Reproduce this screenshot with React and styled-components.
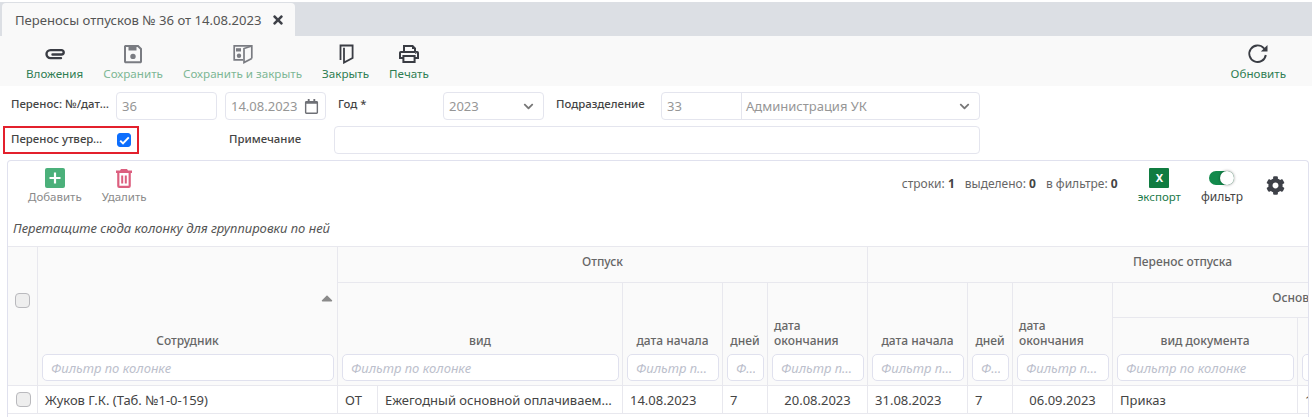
import React from "react";
import styled, { createGlobalStyle } from "styled-components";
import { FaTimes, FaRegCalendar, FaChevronDown, FaCog, FaCaretUp } from "react-icons/fa";

const Global = createGlobalStyle`
  html, body { margin: 0; padding: 0; background: #fff; }
  body { font-family: "Noto Sans", "Open Sans", sans-serif; font-size: 12px; color: #444; }
  * { box-sizing: border-box; }
`;

const Page = styled.div`
  width: 1312px;
  height: 417px;
  overflow: hidden;
  background: #fff;
  padding-top: 2px;
`;
const TabBar = styled.div`
  height: 34px;
  background: #dcdfe4;
  padding: 1px 0 0 2px;
  display: flex;
`;
const Tab = styled.div`
  width: 293px;
  height: 33px;
  background: #f9f9f9;
  border-radius: 4px 4px 0 0;
  display: flex;
  align-items: center;
  padding: 0 10px 0 13px;
  justify-content: space-between;
  font-size: 13.1px;
  white-space: nowrap;
  color: #555;
  svg { color: #3e4148; font-size: 14px; }
`;
const Toolbar = styled.div`
  height: 50px;
  background: #f9f9f9;
  display: flex;
  gap: 20px;
  padding: 8px 26px 0;
`;
const ToolButton = styled.div`
  display: flex;
  flex-direction: column;
  align-items: center;
  gap: 2px;
  font-size: 11.65px;
  line-height: 16px;
  font-weight: 400;
  color: ${(p) => (p.$disabled ? "#7db795" : "#2f7d52")};
  ${(p) => p.$push && "margin-left: auto;"}
`;
const ToolIcon = styled.svg`
  display: block;
  width: 24px;
  height: 20px;
  color: ${(p) => (p.$disabled ? "#7a7c82" : "#3a3d44")};
`;
const Form = styled.div`
  display: flex;
  flex-direction: column;
  gap: 6px;
  padding: 6px 0 6px;
`;
const FormRow = styled.div`
  display: flex;
  align-items: center;
  height: 28px;
  padding-left: ${(p) => p.$left}px;
`;
const Label = styled.div`
  width: ${(p) => p.$w}px;
  flex: none;
  font-size: 11.4px;
  line-height: 14px;
  font-weight: 500;
  color: #444;
  padding-right: ${(p) => p.$pr || 5}px;
  white-space: nowrap;
  overflow: hidden;
  text-overflow: ellipsis;
  margin-top: ${(p) => p.$up || 0}px;
`;
const Field = styled.div`
  width: ${(p) => p.$w}px;
  height: 28px;
  flex: none;
  margin-right: ${(p) => p.$mr || 0}px;
  border: 1px solid #e4e5ee;
  border-radius: 4px;
  background: #fff;
  display: flex;
  align-items: center;
  padding: 0 5px;
  font-size: 13px;
  color: #969696;
  justify-content: space-between;
`;
const ComboCode = styled.div`
  width: 80px;
  flex: none;
  height: 100%;
  margin-left: -5px;
  padding-left: 5px;
  display: flex;
  align-items: center;
  border-right: 1px solid #e4e5ee;
`;
const ComboName = styled.div`
  flex: 1;
  padding-left: 4px;
`;
const Chevron = styled(FaChevronDown)`
  color: #777;
  font-size: 11px;
  margin-right: 4px;
  flex: none;
`;
const Calendar = styled(FaRegCalendar)`
  color: #6e7076;
  font-size: 15px;
  margin-right: 1px;
  flex: none;
`;
const Approved = styled.div`
  width: 136px;
  height: 28px;
  border: 2px solid #e3202c;
  padding-left: 6px;
  display: flex;
  align-items: center;
  margin-right: 90px;
  flex: none;
`;
const CheckBox = styled.span`
  display: flex;
  align-items: center;
  justify-content: center;
  width: ${(p) => p.$size || 14}px;
  height: ${(p) => p.$size || 14}px;
  border-radius: ${(p) => (p.$on ? 3 : 4)}px;
  flex: none;
  background: ${(p) => (p.$on ? "#0d6efd" : "#eeeeee")};
  border: 1px solid ${(p) => (p.$on ? "#0d6efd" : "#b9b9bd")};
`;
const Panel = styled.div`
  margin-left: 7px;
  width: 1302px;
  height: 300px;
  border: 1px solid #e0e1ee;
  border-bottom: none;
  border-radius: 4px 4px 0 0;
  overflow: hidden;
`;
const PanelHead = styled.div`
  display: flex;
  height: 47px;
  padding: 7px 23px 0 20px;
  gap: 20px;
`;
const PanelButton = styled.div`
  display: flex;
  flex-direction: column;
  align-items: center;
  gap: 1px;
  font-size: 11.5px;
  line-height: 16px;
  color: #8a8a8a;
  font-weight: 400;
`;
const Stats = styled.div`
  margin-left: auto;
  margin-top: 8px;
  height: 16px;
  line-height: 16px;
  display: flex;
  gap: 10px;
  font-size: 12px;
  color: #666;
  b { color: #444; font-weight: 700; }
`;
const ExportButton = styled.div`
  display: flex;
  flex-direction: column;
  align-items: center;
  font-size: 11.5px;
  line-height: 16px;
  gap: 1px;
  color: #1c7a4a;
  font-weight: 400;
`;
const XlsIcon = styled.div`
  width: 20px;
  height: 20px;
  background: #107c41;
  border-radius: 1px;
  color: #fff;
  font-size: 11px;
  font-weight: 700;
  display: flex;
  align-items: center;
  justify-content: center;
`;
const FilterButton = styled(ExportButton)`
  color: #444;
  font-size: 12px;
`;
const Toggle = styled.div`
  width: 25px;
  height: 14px;
  border-radius: 7px;
  margin: 3px 0;
  background: #128a4c;
  position: relative;
  &::after {
    content: "";
    position: absolute;
    right: 0;
    top: 0;
    width: 14px;
    height: 14px;
    border-radius: 50%;
    background: #fff;
    box-shadow: 0 0 3px rgba(0, 0, 0, 0.45);
  }
`;
const Gear = styled(FaCog)`
  color: #3e4148;
  font-size: 19px;
  margin: 8px 0 0 3px;
  flex: none;
`;
const GroupHint = styled.div`
  height: 38px;
  padding: 11px 0 0 5px;
  line-height: 18px;
  font-size: 13px;
  font-style: italic;
  color: #555;
`;
const Table = styled.table`
  table-layout: fixed;
  border-collapse: separate;
  border-spacing: 0;
  width: 1490px;
  border-top: 1px solid #e8e8ee;
`;
const Row = styled.tr`
  height: ${(p) => p.$h}px;
`;
const Head = styled.th`
  background: #fafafa;
  border-right: 1px solid #e8e8ee;
  border-bottom: ${(p) => (p.$line ? "1px solid #e8e8ee" : "none")};
  font-size: 12px;
  line-height: 15px;
  font-weight: 500;
  color: #666;
  text-align: ${(p) => (p.$left ? "left" : "center")};
  vertical-align: ${(p) => (p.$bottom ? "bottom" : "middle")};
  padding: ${(p) => (p.$bottom ? "0 6px 5px" : p.$line ? "0 6px 6px" : "0 6px")};
  position: relative;
`;
const CheckHead = styled(Head)`
  text-align: left;
  padding: 0 0 0 7px;
`;
const SortMark = styled(FaCaretUp)`
  position: absolute;
  right: 1px;
  top: 42px;
  font-size: 18px;
  color: #8a8a8a;
`;
const FilterCell = styled.th`
  background: #fafafa;
  border-right: 1px solid #e8e8ee;
  border-bottom: 1px solid #e8e8ee;
  padding: 1px 3px 4px 4px;
  font-weight: 400;
`;
const FilterInput = styled.input`
  display: block;
  width: 100%;
  height: 27px;
  border: 1px solid #e0e1ee;
  border-radius: 5px;
  background: #fff;
  padding: 0 8px;
  font: italic 13px "Noto Sans", "Open Sans", sans-serif;
  text-overflow: ellipsis;
  outline: none;
  &::placeholder { color: #bcc0cc; opacity: 1; }
`;
const Cell = styled.td`
  border-right: 1px solid #e8e8ee;
  border-bottom: 1px solid #e8e8ee;
  padding: 0 7px;
  font-size: 13px;
  color: #444;
  white-space: nowrap;
  overflow: hidden;
  text-overflow: ellipsis;
  text-align: ${(p) => (p.$center ? "center" : "left")};
`;
const CheckCell = styled(Cell)`
  padding: 0 0 0 8px;
  text-overflow: clip;
`;

const widths = [30, 300, 40, 245, 100, 45, 100, 100, 45, 100, 185, 200];

const Clip = () => (
  <ToolIcon viewBox="0 0 24 20" fill="none" stroke="currentColor" strokeWidth="2.4" strokeLinecap="round">
    <path d="M9.5 10.5h9a2.2 2.2 0 0 0 0-4.400H7.500a4 4 0 0 0 0 8H18" />
  </ToolIcon>
);
const Save = () => (
  <ToolIcon viewBox="0 0 24 20" $disabled>
    <path fill="none" stroke="currentColor" strokeWidth="2" d="M4.500 2H17l3 3v12.500a.8.8 0 0 1-.8.8H4.800a.8.8 0 0 1-.8-.8V2.500z" />
    <path fill="currentColor" d="M7.500 2h8v4.500h-8z" />
    <circle cx="12" cy="12.400" r="2.700" fill="currentColor" />
  </ToolIcon>
);
const SaveClose = () => (
  <ToolIcon viewBox="0 0 24 20" $disabled>
    <g fill="none" stroke="currentColor" strokeWidth="1.700">
      <path d="M12 15.800H3.200V1.800H20.800V14.500" />
      <path d="M20.800 2L13 4.500V18.500L20.800 14.500" />
    </g>
    <path fill="currentColor" d="M5 4.200h5v3.300H5z" />
    <circle cx="8" cy="11.800" r="2.200" fill="currentColor" />
  </ToolIcon>
);
const Door = () => (
  <ToolIcon viewBox="0 0 24 20" fill="none" stroke="currentColor" strokeWidth="1.800">
    <path d="M6.500 16V1.500H18.600V14L10 18.600V3.800" />
  </ToolIcon>
);
const Printer = () => (
  <ToolIcon viewBox="0 0 24 20">
    <path fill="currentColor" fillRule="evenodd" d="M6 1h10l3 3v3h1.200A1.800 1.800 0 0 1 22 8.800V15h-3.400v4H5.400v-4H2V8.800A1.800 1.800 0 0 1 3.800 7H6V1Zm2 2v4h9V5h-2V3H8ZM4 9v4h1.400v-2h13.200v2H20V9H4Zm3.400 4v4h9.200v-4H7.400Zm10.600-3.200h1.400V8.800H18v1Z" />
  </ToolIcon>
);
const Refresh = () => (
  <ToolIcon viewBox="0 0 24 20" fill="none" stroke="currentColor" strokeWidth="1.900">
    <path d="M19.800 11a8.300 8.300 0 1 1-2-6.800L20 6.400" />
    <path d="M21.500 1v6.600h-6.600z" fill="currentColor" stroke="none" />
  </ToolIcon>
);
const PanelIcon = styled.svg`
  display: block;
  width: 20px;
  height: 20px;
`;
const AddIcon = () => (
  <PanelIcon viewBox="0 0 20 20">
    <rect width="20" height="20" rx="2" fill="#4bb07a" />
    <path d="M10 4.500v11M4.500 10h11" stroke="#fff" strokeWidth="2.200" />
  </PanelIcon>
);
const TrashIcon = () => (
  <PanelIcon viewBox="0 0 20 20">
    <path fill="#dc5f7f" fillRule="evenodd" d="M7 1h6l1 1.600h4V5h-1.200v13a2 2 0 0 1-2 2H5.200a2 2 0 0 1-2-2V5H2V2.600h4L7 1ZM5.400 5v12.800h9.200V5H5.400Zm1.800 2.500h2v8h-2v-8Zm3.600 0h2v8h-2v-8Z" />
  </PanelIcon>
);
const Tick = () => (
  <svg width="11" height="9" viewBox="0 0 11 9" fill="none">
    <path d="M1.200 4.600 4 7.400l5.800-6" stroke="#fff" strokeWidth="2" />
  </svg>
);

const FILTER = "Фильтр по колонке";

export default function App() {
  return (
    <Page>
      <Global />
      <TabBar>
        <Tab>
          Переносы отпусков № 36 от 14.08.2023
          <FaTimes />
        </Tab>
      </TabBar>
      <Toolbar>
        <ToolButton><Clip />Вложения</ToolButton>
        <ToolButton $disabled><Save />Сохранить</ToolButton>
        <ToolButton $disabled><SaveClose />Сохранить и закрыть</ToolButton>
        <ToolButton><Door />Закрыть</ToolButton>
        <ToolButton><Printer />Печать</ToolButton>
        <ToolButton $push><Refresh />Обновить</ToolButton>
      </Toolbar>
      <Form>
        <FormRow $left={11}>
          <Label $w={105} $up={-4}>Перенос: №/дата документа</Label>
          <Field $w={101} $mr={8}>36</Field>
          <Field $w={101} $mr={12}>14.08.2023<Calendar /></Field>
          <Label $w={105} $up={-4}>Год *</Label>
          <Field $w={101} $mr={12}>2023<Chevron /></Field>
          <Label $w={105} $up={-4}>Подразделение</Label>
          <Field $w={319}>
            <ComboCode>33</ComboCode>
            <ComboName>Администрация УК</ComboName>
            <Chevron />
          </Field>
        </FormRow>
        <FormRow $left={3}>
          <Approved>
            <Label $w={106} $up={-2} $pr={14}>Перенос утвержден</Label>
            <CheckBox $on><Tick /></CheckBox>
          </Approved>
          <Label $w={105} $up={-2}>Примечание</Label>
          <Field $w={646} />
        </FormRow>
      </Form>
      <Panel>
        <PanelHead>
          <PanelButton><AddIcon />Добавить</PanelButton>
          <PanelButton><TrashIcon />Удалить</PanelButton>
          <Stats>
            <span>строки: <b>1</b></span>
            <span>выделено: <b>0</b></span>
            <span>в фильтре: <b>0</b></span>
          </Stats>
          <ExportButton><XlsIcon>X</XlsIcon>экспорт</ExportButton>
          <FilterButton><Toggle />фильтр</FilterButton>
          <Gear />
        </PanelHead>
        <GroupHint>Перетащите сюда колонку для группировки по ней</GroupHint>
        <Table>
          <colgroup>
            {widths.map((w, i) => <col key={i} style={{ width: w }} />)}
          </colgroup>
          <thead>
            <Row $h={36}>
              <CheckHead rowSpan={3}><CheckBox $size={15} /></CheckHead>
              <Head rowSpan={3} $bottom>Сотрудник<SortMark /></Head>
              <Head colSpan={5} $line>Отпуск</Head>
              <Head colSpan={5} $line>Перенос отпуска</Head>
            </Row>
            <Row $h={35}>
              <Head colSpan={2} rowSpan={2} $bottom>вид</Head>
              <Head rowSpan={2} $bottom>дата начала</Head>
              <Head rowSpan={2} $bottom>дней</Head>
              <Head rowSpan={2} $bottom $left>дата окончания</Head>
              <Head rowSpan={2} $bottom>дата начала</Head>
              <Head rowSpan={2} $bottom>дней</Head>
              <Head rowSpan={2} $bottom $left>дата окончания</Head>
              <Head colSpan={2} $line>Основание</Head>
            </Row>
            <Row $h={35}>
              <Head $bottom>вид документа</Head>
              <Head $bottom>номер документа</Head>
            </Row>
            <Row $h={33}>
              <FilterCell />
              <FilterCell><FilterInput placeholder={FILTER} /></FilterCell>
              <FilterCell colSpan={2}><FilterInput placeholder={FILTER} /></FilterCell>
              {widths.slice(4).map((_, i) => (
                <FilterCell key={i}><FilterInput placeholder={FILTER} /></FilterCell>
              ))}
            </Row>
          </thead>
          <tbody>
            <Row $h={28}>
              <CheckCell><CheckBox $size={15} /></CheckCell>
              <Cell>Жуков Г.К. (Таб. №1-0-159)</Cell>
              <Cell>ОТ</Cell>
              <Cell>Ежегодный основной оплачиваемый отпуск</Cell>
              <Cell>14.08.2023</Cell>
              <Cell>7</Cell>
              <Cell $center>20.08.2023</Cell>
              <Cell>31.08.2023</Cell>
              <Cell>7</Cell>
              <Cell $center>06.09.2023</Cell>
              <Cell>Приказ</Cell>
              <Cell>1</Cell>
            </Row>
          </tbody>
        </Table>
      </Panel>
    </Page>
  );
}
